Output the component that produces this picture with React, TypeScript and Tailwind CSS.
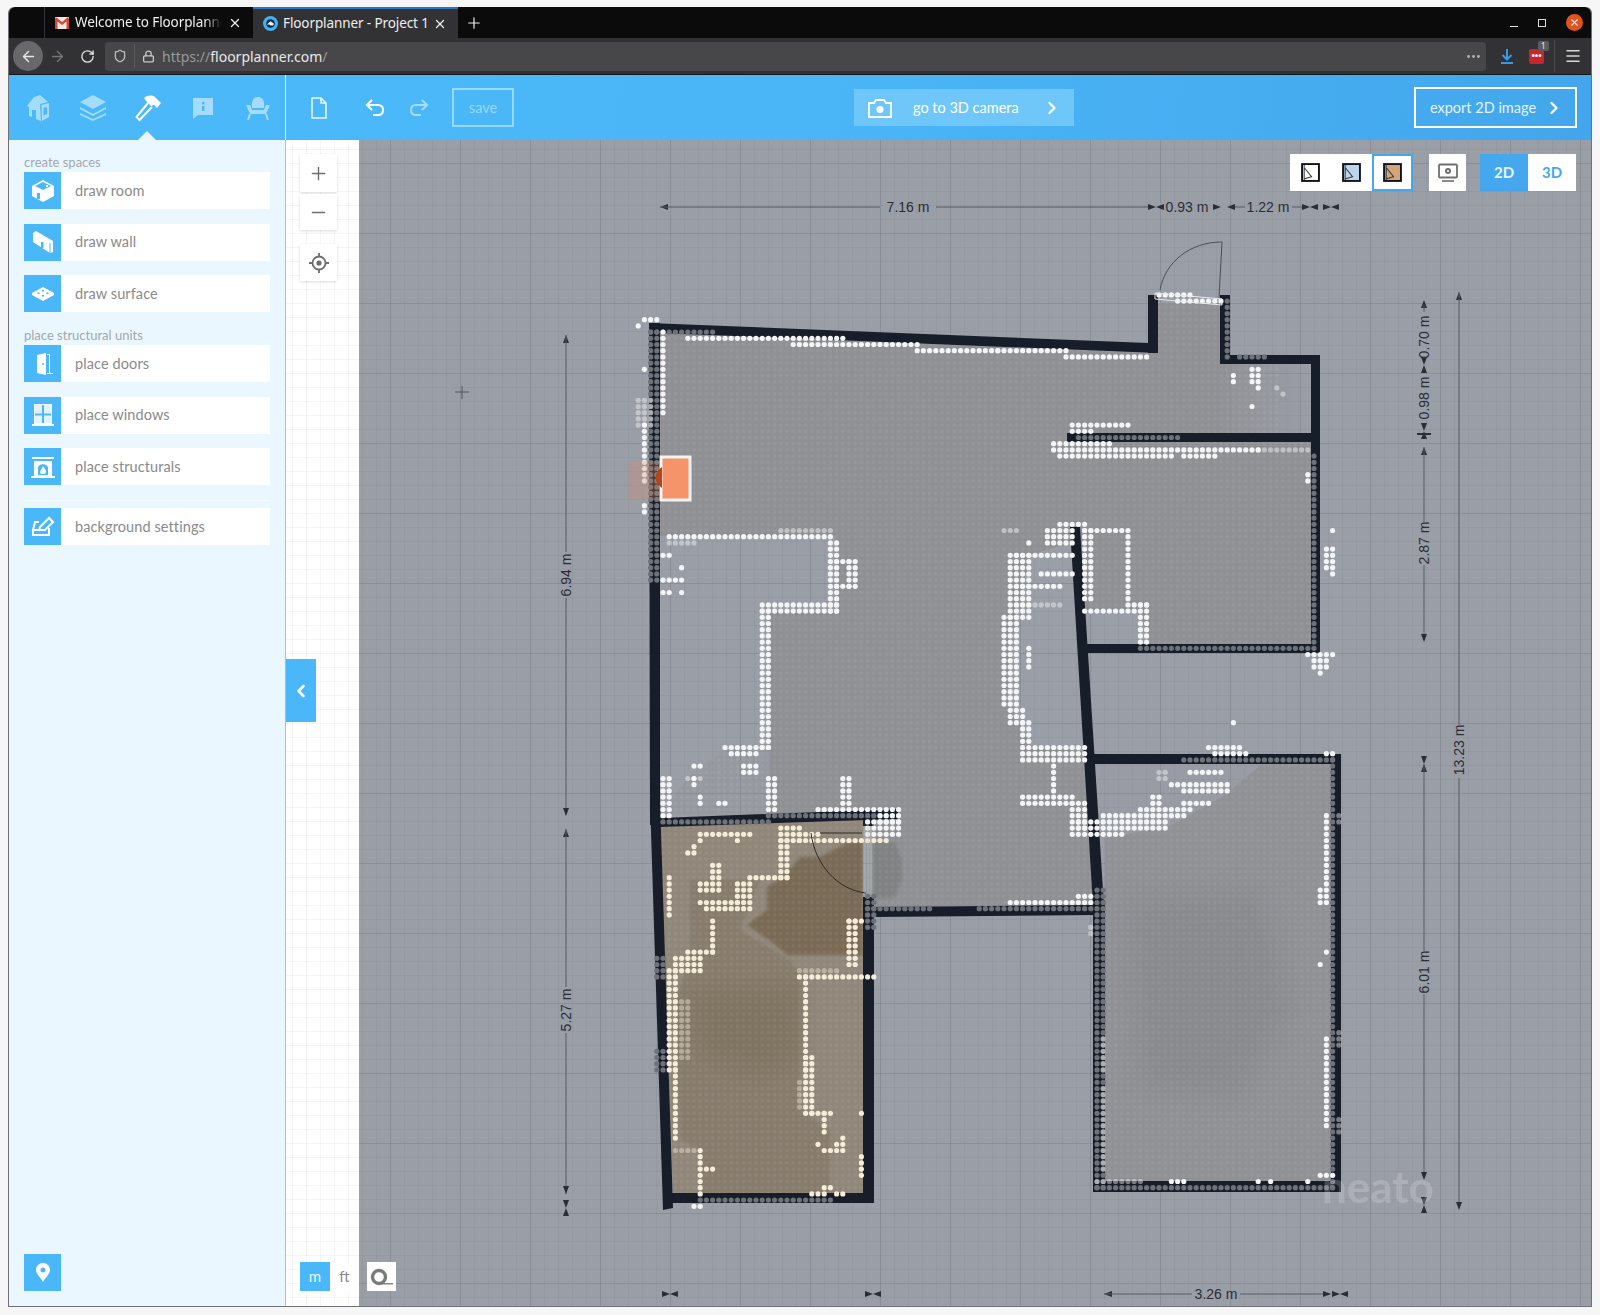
import React from "react";
import { ArrowLeft, ArrowRight, ChevronLeft, ChevronRight, Ellipsis, Lock, Menu, Minus, Plus, RotateCw, Shield, X } from "lucide-react";

const FONT_UI = "font-['Noto_Sans',sans-serif]";
const FONT_APP = "font-['Lato',sans-serif]";

// dot lattice of the scan, in page pixels
const LX = 663;
const LY = 536.7;
const PITCH = 6.2;

type Run = [number, number, number, number];

const FILLS: Record<string, string> = {
  w: "#f4f5f6",
  l: "rgba(255,255,255,.42)",
  d: "#6e7279",
  c: "#f5ecd9",
  m: "rgba(245,236,217,.4)",
};

const RUNS: Record<string, Run[]> = {
  d: [
    [652, 335, 658, 580], [652, 330, 712, 332], [1227, 300, 1227, 355], [1240, 357, 1265, 357],
    [1080, 437, 1180, 437], [1314, 455, 1314, 650], [1140, 648, 1310, 648], [1182, 759, 1335, 759],
    [1335, 762, 1335, 1188], [1097, 892, 1103, 1186], [1097, 1187, 1335, 1187], [662, 822, 770, 822],
    [770, 813, 897, 816], [700, 1199, 830, 1199], [980, 908, 1090, 908], [875, 908, 930, 908],
    [870, 895, 876, 925], [655, 1050, 662, 1070], [655, 957, 662, 977],
  ],
  w: [
    [688, 338, 843, 338], [793, 344, 920, 344], [920, 348, 1000, 348], [1000, 351, 1063, 351], [1063, 357, 1147, 357],
    [1157, 295, 1187, 295], [1177, 301, 1220, 301],
    [663, 335, 663, 410], [645, 370, 645, 370], [645, 427, 645, 482], [645, 320, 658, 320], [638, 326, 638, 326],
    [645, 508, 645, 515], [667, 536, 833, 536], [832, 540, 838, 610], [850, 560, 857, 587], [838, 560, 850, 560], [838, 587, 850, 587],
    [762, 604, 837, 604], [762, 610, 837, 610], [763, 610, 769, 745], [725, 747, 770, 747], [730, 753, 757, 753], [745, 765, 757, 772],
    [663, 555, 670, 555], [683, 565, 683, 565], [663, 578, 680, 578], [683, 590, 683, 590], [663, 590, 670, 590],
    [695, 765, 700, 765], [695, 777, 695, 785], [701, 795, 701, 803], [663, 777, 670, 813], [768, 777, 775, 810], [842, 777, 850, 803],
    [720, 803, 727, 803], [817, 808, 900, 808], [867, 825, 900, 835], [882, 816, 900, 822],
    [1017, 553, 1070, 553], [1010, 557, 1030, 620], [1003, 620, 1017, 707], [1012, 710, 1020, 725], [1020, 725, 1027, 742],
    [1020, 747, 1083, 760], [1053, 767, 1053, 790], [1020, 797, 1073, 803], [1073, 803, 1087, 837], [1028, 647, 1028, 667],
    [1028, 543, 1028, 543], [1047, 530, 1073, 543], [1060, 524, 1087, 524], [1087, 530, 1120, 530], [1128, 530, 1128, 600],
    [1128, 603, 1148, 603], [1140, 603, 1148, 642], [1085, 610, 1133, 610], [1085, 533, 1090, 600], [1040, 573, 1070, 573], [1017, 587, 1057, 587],
    [1072, 424, 1130, 424], [1072, 431, 1093, 431], [1053, 443, 1107, 443], [1052, 450, 1260, 450], [1058, 456, 1173, 456], [1182, 456, 1212, 456],
    [1233, 375, 1233, 382], [1252, 368, 1258, 382], [1258, 388, 1258, 388], [1252, 407, 1252, 407],
    [1307, 473, 1307, 480], [1327, 548, 1333, 567], [1333, 573, 1333, 573], [1333, 530, 1333, 530], [1307, 653, 1335, 653], [1313, 660, 1325, 667], [1320, 673, 1320, 673],
    [1234, 721, 1234, 721], [1210, 747, 1240, 747], [1214, 754, 1247, 754], [1172, 783, 1225, 783], [1183, 790, 1227, 790], [1193, 773, 1220, 773],
    [1183, 802, 1207, 802], [1140, 809, 1187, 809], [1103, 816, 1183, 816], [1080, 821, 1167, 827], [1090, 834, 1123, 834], [1152, 796, 1162, 804],
    [1013, 902, 1093, 902], [1080, 895, 1093, 895], [1327, 814, 1327, 883], [1320, 891, 1327, 902], [1327, 951, 1327, 951], [1320, 964, 1320, 964],
    [1327, 1038, 1327, 1126], [1327, 754, 1333, 754], [1258, 1179, 1258, 1179], [1270, 1179, 1270, 1179], [1308, 1179, 1308, 1179], [1320, 1173, 1330, 1173], [1170, 1179, 1185, 1179],
    [695, 1206, 701, 1206],
  ],
  l: [
    [638, 400, 650, 427], [780, 530, 830, 530], [667, 542, 697, 542], [1003, 530, 1017, 530], [1017, 605, 1057, 605], [1260, 450, 1310, 450],
    [1276, 388, 1276, 388], [1282, 394, 1282, 394], [1105, 1091, 1105, 1172], [1105, 1041, 1105, 1072], [1100, 1179, 1143, 1179], [1090, 925, 1090, 933], [1340, 814, 1340, 824], [1340, 1030, 1340, 1048],
    [1340, 1122, 1340, 1135], [1160, 773, 1165, 778], [688, 777, 700, 777],
  ],
  c: [
    [700, 833, 747, 833], [700, 840, 700, 840], [737, 840, 737, 840], [688, 852, 695, 852], [695, 845, 695, 845],
    [778, 827, 797, 840], [797, 833, 820, 833], [797, 840, 887, 840], [780, 840, 788, 877], [750, 877, 788, 877],
    [713, 863, 720, 877], [700, 883, 720, 890], [737, 883, 747, 907], [700, 902, 740, 902], [707, 908, 730, 908], [670, 877, 670, 913],
    [713, 920, 713, 950], [687, 952, 713, 952], [673, 957, 703, 970], [668, 973, 675, 1067], [675, 1067, 678, 1137],
    [850, 920, 857, 963], [847, 922, 862, 922], [798, 977, 873, 977], [803, 980, 807, 1067], [807, 1060, 812, 1113], [812, 1113, 832, 1113],
    [825, 1113, 825, 1132], [818, 1143, 818, 1143], [825, 1150, 840, 1150], [843, 1137, 843, 1143], [836, 1143, 836, 1143],
    [862, 1113, 862, 1113], [862, 1155, 862, 1175], [825, 1187, 832, 1187], [812, 1193, 825, 1193], [838, 1193, 843, 1193],
    [701, 1150, 701, 1192], [708, 1168, 713, 1168],
  ],
  m: [[798, 970, 835, 970], [673, 1150, 695, 1150], [800, 1080, 800, 1110], [680, 1000, 685, 1060]],
};

const snapped = (v: number, origin: number) => Math.round((v - origin) / PITCH);

const scanDots = Object.entries(RUNS).flatMap(([kind, runs]) =>
  runs.flatMap(([x1, y1, x2, y2]) => {
    const out: { x: number; y: number; kind: string }[] = [];
    for (let i = snapped(x1, LX); i <= snapped(x2, LX); i++) {
      for (let j = snapped(y1, LY); j <= snapped(y2, LY); j++) {
        out.push({ x: LX + i * PITCH, y: LY + j * PITCH, kind });
      }
    }
    return out;
  })
);

const WALLS = [
  "649,323 1148,343 1158,353 660,333",
  "649,323 660,323 660,825 650,825",
  "650,800 660,800 673,1208 663,1210",
  "1148,295 1158,295 1158,353 1148,353",
  "1220,295 1230,295 1230,364 1220,364",
  "1220,355 1320,355 1320,364 1220,364",
  "1311,355 1320,355 1320,653 1311,653",
  "1067,433 1320,433 1320,442 1067,442",
  "1085,644 1320,644 1320,653 1085,653",
  "1070,527 1080,527 1104,906 1093,906",
  "1090,754 1341,754 1341,764 1090,764",
  "1331,754 1341,754 1341,1192 1331,1192",
  "1093,1181 1341,1181 1341,1192 1093,1192",
  "1093,900 1105,900 1105,1192 1093,1192",
  "873,907 1095,905 1095,915 873,917",
  "660,818 898,809 898,819 660,827",
  "863,897 874,897 874,1203 863,1203",
  "863,812 874,812 874,826 863,826",
  "670,1193 874,1193 874,1203 670,1203",
];

const MAIN_FLOOR =
  "660,333 1148,353 1158,303 1220,303 1222,364 1222,433 1228,442 1311,442 1311,644 1148,644 1140,610 1086,610 1080,540 1030,555 1015,620 1007,700 1030,745 1085,752 1095,905 875,907 872,825 860,812 770,815 768,610 835,610 835,536 660,536";
const RIGHT_FLOOR = "1105,838 1170,826 1225,795 1262,764 1331,764 1331,1181 1105,1181";
const KITCHEN_FLOOR = "660,827 863,818 863,1193 673,1193";
const LOWER_LEFT = "660,815 768,815 768,750 725,750 690,775";

function Tri({ x, y, dir }: { x: number; y: number; dir: "l" | "r" | "u" | "d" }) {
  const pts = {
    l: `${x},${y} ${x + 8},${y - 3} ${x + 8},${y + 3}`,
    r: `${x},${y} ${x - 8},${y - 3} ${x - 8},${y + 3}`,
    u: `${x},${y} ${x - 3},${y + 8} ${x + 3},${y + 8}`,
    d: `${x},${y} ${x - 3},${y - 8} ${x + 3},${y - 8}`,
  }[dir];
  return <polygon points={pts} fill="#2a2e36" />;
}

function PairH({ x, y }: { x: number; y: number }) {
  return (
    <>
      <Tri x={x} y={y} dir="r" />
      <Tri x={x} y={y} dir="l" />
    </>
  );
}

function PairV({ x, y }: { x: number; y: number }) {
  return (
    <>
      <Tri x={x} y={y} dir="d" />
      <Tri x={x} y={y} dir="u" />
    </>
  );
}

function Line({ x1, y1, x2, y2 }: { x1: number; y1: number; x2: number; y2: number }) {
  return <line x1={x1} y1={y1} x2={x2} y2={y2} stroke="#565a62" strokeWidth="1" />;
}

function DimH({ label, x, y }: { label: string; x: number; y: number }) {
  return (
    <text x={x} y={y + 5} textAnchor="middle" fontSize="14" fill="#2a2e36" fontFamily="'Liberation Sans',sans-serif">
      {label}
    </text>
  );
}

function DimV({ label, x, y }: { label: string; x: number; y: number }) {
  return (
    <text x={x + 5} y={y} transform={`rotate(-90 ${x + 5} ${y})`} textAnchor="middle" fontSize="14" fill="#2a2e36" fontFamily="'Liberation Sans',sans-serif">
      {label}
    </text>
  );
}

function FloorPlan() {
  return (
    <svg className="absolute inset-0" width="1232" height="1166" viewBox="359 140 1232 1166">
      <defs>
        <pattern id="hatch" x={LX - PITCH / 2} y={LY - PITCH / 2} width={PITCH} height={PITCH} patternUnits="userSpaceOnUse">
          <circle cx={PITCH / 2} cy={PITCH / 2} r="1.9" fill="rgba(255,255,255,.055)" />
        </pattern>
        <linearGradient id="fade" x1="0" x2="1" y1="0" y2="0">
          <stop offset="0" stopColor="#8f9094" stopOpacity=".9" />
          <stop offset="1" stopColor="#8f9094" stopOpacity=".05" />
        </linearGradient>
        <filter id="soft" x="-5%" y="-5%" width="110%" height="110%">
          <feGaussianBlur stdDeviation="1.4" />
        </filter>
        <filter id="wide" x="-20%" y="-20%" width="140%" height="140%">
          <feGaussianBlur stdDeviation="12" />
        </filter>
        <clipPath id="floor-clip">
          <polygon points={MAIN_FLOOR} />
          <polygon points={RIGHT_FLOOR} />
          <polygon points={KITCHEN_FLOOR} />
          <polygon points={LOWER_LEFT} />
          <polygon points="1222,364 1280,364 1280,433 1222,433" />
        </clipPath>
        <clipPath id="right-clip">
          <polygon points={RIGHT_FLOOR} />
        </clipPath>
        <clipPath id="kitchen-clip">
          <polygon points={KITCHEN_FLOOR} />
        </clipPath>
      </defs>

      {/* scanned floor */}
      <polygon points={MAIN_FLOOR} fill="#8f9094" />
      <polygon points="1222,364 1311,364 1311,433 1222,433" fill="url(#fade)" />
      <polygon points={LOWER_LEFT} fill="#8f9094" opacity=".35" />
      <polygon points={RIGHT_FLOOR} fill="#909195" />
      <g clipPath="url(#right-clip)">
        <polygon points="1130,900 1260,890 1290,1010 1240,1100 1140,1090" fill="#85868a" opacity=".6" filter="url(#wide)" />
      </g>
      <polygon points="1100,764 1262,764 1225,795 1170,826 1100,838" fill="#909195" opacity=".12" />
      <polygon points="873,842 895,842 902,860 902,880 895,898 873,898" fill="#808182" filter="url(#soft)" />

      {/* kitchen */}
      <polygon points={KITCHEN_FLOOR} fill="#90877a" />
      <g clipPath="url(#kitchen-clip)">
        <polygon points="690,880 760,880 740,930 790,960 800,975 800,1110 830,1130 830,1193 700,1193 700,1150 680,1140 675,1000 690,960" fill="#877b6c" filter="url(#soft)" />
        <polygon points="690,990 800,985 800,1060 760,1075 700,1055" fill="#7f7362" filter="url(#wide)" />
        <polygon points="800,857 820,857 847,843 863,842 863,955 787,955 773,943 747,925 767,910 767,887 783,877" fill="#796a55" filter="url(#soft)" />
      </g>

      <rect x="359" y="140" width="1232" height="1166" fill="url(#hatch)" clipPath="url(#floor-clip)" />

      {WALLS.map((pts) => (
        <polygon key={pts} points={pts} fill="#181e29" />
      ))}

      {scanDots.map((d) => (
        <circle key={`${d.kind}${d.x}-${d.y}`} cx={d.x} cy={d.y} r="2.6" fill={FILLS[d.kind]} />
      ))}

      {/* doors */}
      <polygon points="1155,293 1222,299 1222,305 1155,299" fill="none" stroke="#e8e9ea" strokeWidth="1" />
      <path d="M1222 242 C1190 242 1165 262 1160 290 M1222 242 L1219 298" fill="none" stroke="#4a4e55" strokeWidth="1" />
      <path d="M811 833 C815 865 838 890 866 893 M820 833 L862 833" fill="none" stroke="#2d2a26" strokeWidth="1" />
      <path d="M865 826 V893 M868 826 V893 M871 826 V893" fill="none" stroke="#b8b9ba" strokeWidth="1" opacity=".7" />

      {/* selected marker */}
      <rect x="627" y="461" width="34" height="39" fill="#d58c6c" opacity=".3" />
      <rect x="661" y="457" width="29" height="43" fill="#f5946b" stroke="#f3f3f3" strokeWidth="3" />
      <path d="M662 467 C654 472 653 482 662 488 Z" fill="#b4471a" />

      {/* cursor cross */}
      <path d="M462 386 V399 M455 392 H469" stroke="#50545c" strokeWidth="1" />

      {/* dimensions */}
      <Tri x={660} y={207} dir="l" />
      <Line x1={660} y1={207} x2={880} y2={207} />
      <DimH label="7.16 m" x={908} y={207} />
      <Line x1={936} y1={207} x2={1150} y2={207} />
      <PairH x={1156} y={207} />
      <DimH label="0.93 m" x={1187} y={207} />
      <Tri x={1221} y={207} dir="r" />
      <Tri x={1227} y={207} dir="l" />
      <Line x1={1235} y1={207} x2={1245} y2={207} />
      <DimH label="1.22 m" x={1268} y={207} />
      <Line x1={1292} y1={207} x2={1304} y2={207} />
      <PairH x={1310} y={207} />
      <PairH x={1331} y={207} />

      <Tri x={566} y={335} dir="u" />
      <Line x1={566} y1={335} x2={566} y2={552} />
      <DimV label="6.94 m" x={566} y={575} />
      <Line x1={566} y1={598} x2={566} y2={815} />
      <Tri x={566} y={816} dir="d" />
      <Tri x={566} y={829} dir="u" />
      <Line x1={566} y1={829} x2={566} y2={987} />
      <DimV label="5.27 m" x={566} y={1010} />
      <Line x1={566} y1={1033} x2={566} y2={1194} />
      <Tri x={566} y={1194} dir="d" />
      <PairV x={566} y={1208} />

      <Tri x={1424} y={300} dir="u" />
      <Line x1={1424} y1={305} x2={1424} y2={312} />
      <DimV label="0.70 m" x={1424} y={337} />
      <PairV x={1424} y={365} />
      <DimV label="0.98 m" x={1424} y={398} />
      <PairV x={1424} y={431} />
      <path d="M1417 434 H1431" stroke="#2a2e36" strokeWidth="2" />
      <Tri x={1424} y={447} dir="u" />
      <Line x1={1424} y1={447} x2={1424} y2={522} />
      <DimV label="2.87 m" x={1424} y={543} />
      <Line x1={1424} y1={565} x2={1424} y2={640} />
      <Tri x={1424} y={642} dir="d" />

      <Tri x={1459} y={292} dir="u" />
      <Line x1={1459} y1={292} x2={1459} y2={725} />
      <DimV label="13.23 m" x={1459} y={750} />
      <Line x1={1459} y1={778} x2={1459} y2={1208} />
      <Tri x={1459} y={1210} dir="d" />

      <PairV x={1424} y={764} />
      <Line x1={1424} y1={764} x2={1424} y2={951} />
      <DimV label="6.01 m" x={1424} y={972} />
      <Line x1={1424} y1={994} x2={1424} y2={1178} />
      <Tri x={1424} y={1180} dir="d" />
      <PairV x={1424} y={1205} />

      <PairH x={670} y={1294} />
      <PairH x={873} y={1294} />
      <Tri x={1104} y={1294} dir="l" />
      <Line x1={1104} y1={1294} x2={1192} y2={1294} />
      <DimH label="3.26 m" x={1216} y={1294} />
      <Line x1={1240} y1={1294} x2={1330} y2={1294} />
      <Tri x={1331} y={1294} dir="r" />
      <PairH x={1340} y={1294} />

      <text x="1322" y="1203" fontSize="44" fontWeight="700" fill="#ffffff" opacity=".18" fontFamily="'Lato',sans-serif">
        neato
      </text>
    </svg>
  );
}

function GmailIcon() {
  return (
    <svg width="14" height="12" viewBox="0 0 14 12" className="shrink-0">
      <rect width="14" height="12" rx="1" fill="#efe9e6" />
      <path d="M0 1.5 V12 H2.5 V4.5 L7 8 L11.5 4.5 V12 H14 V1.5 L12.5 0.5 L7 5 L1.5 0.5 Z" fill="#d0493a" />
    </svg>
  );
}

function FloorplannerFavicon() {
  return (
    <svg width="15" height="15" viewBox="0 0 16 16" className="shrink-0">
      <circle cx="8" cy="8" r="8" fill="#3fb2f4" />
      <circle cx="8" cy="8" r="4.6" fill="#0f2533" />
      <path d="M4 9 L8 5.5 L11.5 8 L11 10 H8 L6.5 9 Z" fill="#e6f5fe" />
    </svg>
  );
}

function Tab({ title, active, icon, fade }: { title: string; active?: boolean; icon: React.ReactNode; fade?: boolean }) {
  return (
    <div className={`relative flex h-full shrink-0 items-center pl-[10px] pr-[11px] ${active ? "w-[205px] gap-[5px] border-t-2 border-[#2f74c0] bg-[#323234]" : "w-[208px] gap-[6px]"}`}>
      {icon}
      <span className={`min-w-0 flex-1 overflow-hidden whitespace-nowrap text-[13.5px] tracking-[-.1px] text-[#eeeeee] ${fade ? "[mask-image:linear-gradient(to_right,black_88%,transparent)]" : ""}`}>
        {title}
      </span>
      <X size={14} strokeWidth={2.2} className="shrink-0 text-[#eeeeee]" />
    </div>
  );
}

function TitleBar() {
  return (
    <div className={`flex h-[31px] shrink-0 items-stretch rounded-t-[6px] bg-[#0b0b0c] ${FONT_UI}`}>
      <div className="w-[36px] border-r border-[#34343a]" />
      <Tab title="Welcome to Floorplanner" icon={<GmailIcon />} fade />
      <Tab title="Floorplanner - Project 1" icon={<FloorplannerFavicon />} active />
      <div className="flex w-[32px] items-center justify-center">
        <Plus size={18} strokeWidth={1.6} className="text-[#eeeeee]" />
      </div>
      <div className="flex-1" />
      <div className="flex items-center gap-[20px] pr-[8px]">
        <div className="mt-[8px] h-[1.5px] w-[8px] bg-[#dddddd]" />
        <div className="h-[8px] w-[8px] border-[1.5px] border-[#dddddd]" />
        <div className="flex h-[17px] w-[17px] items-center justify-center rounded-full bg-[#e2521d]">
          <X size={11} strokeWidth={2.4} className="text-[#ffe9df]" />
        </div>
      </div>
    </div>
  );
}

function NavBar() {
  return (
    <div className={`flex h-[37px] shrink-0 items-center border-b border-[#15171a] bg-[#323234] pl-[4px] pr-[9px] ${FONT_UI}`}>
      <div className="flex h-[30px] w-[30px] items-center justify-center rounded-full bg-[#68686a]">
        <ArrowLeft size={17} strokeWidth={2} className="text-[#e8e8e8]" />
      </div>
      <ArrowRight size={17} strokeWidth={1.8} className="ml-[6px] text-[#77777a]" />
      <RotateCw size={15} strokeWidth={2.2} className="ml-[14px] text-[#dddddd]" />
      <div className="ml-[10px] flex h-[29px] flex-1 items-center rounded-[4px] bg-[#474749] pl-[8px] pr-[4px]">
        <Shield size={14} strokeWidth={2} className="text-[#c8c8c8]" />
        <div className="ml-[7px] h-[24px] w-px bg-[#5a5a5c]" />
        <Lock size={13} strokeWidth={2.4} className="ml-[7px] text-[#c8c8c8]" />
        <span className="ml-[7px] text-[14px] text-[#98989a]">
          https://<span className="text-[#e8e8e8]">floorplanner.com</span>/
        </span>
        <div className="flex-1" />
        <Ellipsis size={17} className="text-[#b4b4b6]" />
      </div>
      <svg width="16" height="17" viewBox="0 0 16 17" className="ml-[13px]">
        <path d="M8 1 V11 M3.5 7 L8 11.5 L12.5 7 M2 15 H14" fill="none" stroke="#3a9ae6" strokeWidth="2" />
      </svg>
      <div className="relative ml-[14px] flex h-[15px] w-[15px] items-center justify-center rounded-[2px] bg-[#c8242b]">
        <span className="mt-[-2px] text-[9px] font-bold leading-none text-white">•••</span>
        <span className="absolute left-[9px] top-[-8px] rounded-[2px] bg-[#5c5c5e] px-[3px] text-[8px] leading-[10px] text-[#eeeeee]">1</span>
      </div>
      <div className="ml-[10px] h-[32px] w-px bg-[#4c4c4e]" />
      <Menu size={18} strokeWidth={2} className="ml-[9px] text-[#d8d8d8]" />
    </div>
  );
}

function HeaderIcons() {
  const dim = "#a6dcfb";
  const slot = "flex w-[55px] items-center justify-center";
  return (
    <div className="relative flex w-[277px] shrink-0 items-center border-r border-[#dff2fe] pl-[2px]">
      <div className={slot}>
        <svg width="24" height="28" viewBox="0 0 24 28">
          <path d="M1 12 L8 3 L14 1 L22 8 L14 10 L15 27 L10 25 V16 H6 V23 L3 22 V13 Z" fill={dim} />
          <path d="M15.5 11 L23 9 V23 L16 27 Z" fill={dim} />
          <path d="M17.5 14 L21 13 V20 L17.5 21.5 Z" fill="#4ab8f8" />
        </svg>
      </div>
      <div className={slot}>
        <svg width="28" height="27" viewBox="0 0 28 27">
          <path d="M14 1 L27 8 L14 15 L1 8 Z M1 13 L14 20 L27 13 L27 15 L14 22 L1 15 Z M1 19 L14 25 L27 19 L27 21 L14 27 L1 21 Z" fill={dim} />
        </svg>
      </div>
      <div className={slot}>
        <svg width="28" height="28" viewBox="0 0 28 28">
          <path d="M14 9 L2.5 23 L5.5 26 L18 13" fill="none" stroke="#ffffff" strokeWidth="2" />
          <path d="M10 4 C14 1 18 1 21 3 L27 9 L23 14 L20 11 L17 12 L13 8 Z" fill="#ffffff" />
        </svg>
      </div>
      <div className={slot}>
        <svg width="22" height="22" viewBox="0 0 22 22">
          <path d="M1 1 H21 V18 H6 L1 22 Z" fill={dim} />
          <rect x="10" y="5" width="2.4" height="2.4" fill="#4ab8f8" />
          <rect x="10" y="9" width="2.4" height="5" fill="#4ab8f8" />
        </svg>
      </div>
      <div className={slot}>
        <svg width="26" height="24" viewBox="0 0 26 24">
          <path d="M7 12 C6 4 9 1 13 1 C17 1 20 4 19 12 Z" fill={dim} />
          <path d="M1 9 L5 9 L7 14 L19 14 L21 9 L25 9 L21 18 L5 18 Z" fill={dim} />
          <path d="M5 18 L3 24 M21 18 L23 24" stroke={dim} strokeWidth="2" />
        </svg>
      </div>
      <div className="absolute bottom-0 left-[129px] h-0 w-0 border-x-[9px] border-b-[9px] border-x-transparent border-b-[#e9f6fe]" />
    </div>
  );
}

function AppHeader() {
  return (
    <div className={`flex h-[65px] shrink-0 bg-[linear-gradient(100deg,#4bb9f9,#4ab6f7_50%,#43a6ec)] ${FONT_APP}`}>
      <HeaderIcons />
      <div className="flex flex-1 items-center pr-[14px]">
        <svg width="18" height="22" viewBox="0 0 18 22" className="ml-[24px]">
          <path d="M2 1 H11 L16 6 V21 H2 Z M11 1 V6 H16" fill="none" stroke="#e8f6fe" strokeWidth="1.6" />
        </svg>
        <svg width="20" height="18" viewBox="0 0 20 18" className="ml-[37px]">
          <path d="M7 1 L2 6 L7 11 M2 6 H13 C16 6 18 8 18 11 C18 14 16 16 13 16 H8" fill="none" stroke="#ffffff" strokeWidth="2" />
        </svg>
        <svg width="20" height="18" viewBox="0 0 20 18" className="ml-[24px]">
          <path d="M13 1 L18 6 L13 11 M18 6 H7 C4 6 2 8 2 11 C2 14 4 16 7 16 H12" fill="none" stroke="#a6dcfb" strokeWidth="2" />
        </svg>
        <div className="ml-[23px] flex h-[39px] w-[62px] items-center justify-center border-2 border-[#9ad8fb] text-[14.5px] text-[#9ad8fb]">save</div>
        <div className="ml-[340px] flex h-[37px] w-[220px] items-center bg-[#6fc7f9] text-[14.5px] text-white">
          <svg width="24" height="20" viewBox="0 0 24 20" className="ml-[14px]">
            <path d="M8 2 H16 L18 5 H23 V19 H1 V5 H6 Z" fill="none" stroke="#ffffff" strokeWidth="1.8" />
            <circle cx="12" cy="11.5" r="3.6" fill="#ffffff" />
          </svg>
          <span className="ml-[21px]">go to 3D camera</span>
          <ChevronRight size={20} strokeWidth={2.6} className="ml-[23px]" />
        </div>
        <div className="flex-1" />
        <div className="flex h-[41px] w-[163px] items-center justify-center gap-[8px] border-2 border-white pl-[3px] text-[14.5px] text-[#e2f4fe]">
          <span>export 2D image</span>
          <ChevronRight size={20} strokeWidth={2.8} className="text-white" />
        </div>
      </div>
    </div>
  );
}

const ICON = "#ffffff";

const toolIcons: Record<string, React.ReactNode> = {
  room: (
    <svg width="24" height="24" viewBox="0 0 24 24">
      <path d="M12 1 L23 7 V17 L12 23 L1 17 V7 Z" fill={ICON} />
      <path d="M12 3 L20 7 L12 11 L4 7 Z" fill="#4ab8f8" />
      <rect x="6" y="14" width="3" height="6" fill="#4ab8f8" />
      <rect x="15" y="6" width="2" height="2" fill={ICON} />
    </svg>
  ),
  wall: (
    <svg width="22" height="24" viewBox="0 0 22 24">
      <path d="M1 3 L4 1 L21 11 V22 L18 23 L1 12 Z" fill={ICON} />
      <rect x="9" y="12" width="2.4" height="6" fill="#4ab8f8" />
      <path d="M18 13 V23" stroke="#4ab8f8" strokeWidth="1" />
    </svg>
  ),
  surface: (
    <svg width="24" height="16" viewBox="0 0 24 16">
      <path d="M12 1 L23 7 V9 L12 15 L1 9 V7 Z" fill={ICON} />
      <path d="M11 4 h2 v1.5 h-2 Z M6.5 6.5 h2 v1.5 h-2 Z M15.5 6.5 h2 v1.5 h-2 Z M11 9 h2 v1.5 h-2 Z" fill="#4ab8f8" />
    </svg>
  ),
  doors: (
    <svg width="20" height="24" viewBox="0 0 20 24">
      <path d="M4 3 L13 1 V23 L4 21 Z" fill={ICON} />
      <path d="M14 2 H17 V21 H20 V22 H14 V21 H16 V3 H14 Z" fill={ICON} />
      <circle cx="10" cy="12" r="1" fill="#4ab8f8" />
    </svg>
  ),
  windows: (
    <svg width="22" height="24" viewBox="0 0 22 24">
      <path d="M2 1 H20 V21 H22 V23 H0 V21 H2 Z" fill={ICON} />
      <path d="M3 2 H10 V10.5 H3 Z M12 2 H19 V10.5 H12 Z M3 12.5 H10 V20 H3 Z M12 12.5 H19 V20 H12 Z" fill="#dff2fe" />
      <path d="M10 2 H12 V20 H10 Z M3 10.5 H19 V12.5 H3 Z" fill="#4ab8f8" />
    </svg>
  ),
  structurals: (
    <svg width="24" height="22" viewBox="0 0 24 22">
      <rect x="1" y="1" width="22" height="2" fill={ICON} />
      <rect x="3" y="5" width="18" height="15" fill={ICON} />
      <rect x="0" y="20" width="24" height="2" fill={ICON} />
      <path d="M7 19 V12 C7 7 17 7 17 12 V19 Z" fill="#4ab8f8" />
      <path d="M12 10 C13 12 15 13 15 16 C15 18 13 18 12 18 C11 18 9 18 9 16 C9 14 11 13 12 10 Z" fill={ICON} />
    </svg>
  ),
  background: (
    <svg width="24" height="24" viewBox="0 0 24 24" fill="none" stroke={ICON} strokeWidth="2">
      <path d="M8 7 H4 L2 15 H14 L22 7 L18 3 L9 12 L8 16" />
      <path d="M2 15 V20 H18 V13" />
    </svg>
  ),
};

function ToolButton({ label, icon }: { label: string; icon: string }) {
  return (
    <div className="flex h-[37px] w-[246px] bg-white">
      <div className="flex w-[37px] items-center justify-center bg-[#4ab8f8]">{toolIcons[icon]}</div>
      <span className="ml-[14px] self-center text-[14.5px] tracking-[.1px] text-[#8a8a8a]">{label}</span>
    </div>
  );
}

function Sidebar() {
  return (
    <aside className={`flex w-[277px] shrink-0 flex-col border-r border-[#b4bbc1] bg-[#ebf7fe] pl-[15px] pr-[15px] ${FONT_APP}`}>
      <div className="mt-[13px] text-[13px] leading-[19px] text-[#a2a9ae]">create spaces</div>
      <div className="flex flex-col gap-[14.5px]">
        <ToolButton label="draw room" icon="room" />
        <ToolButton label="draw wall" icon="wall" />
        <ToolButton label="draw surface" icon="surface" />
      </div>
      <div className="mt-[14px] text-[13px] leading-[19px] text-[#a2a9ae]">place structural units</div>
      <div className="flex flex-col gap-[14.5px]">
        <ToolButton label="place doors" icon="doors" />
        <ToolButton label="place windows" icon="windows" />
        <ToolButton label="place structurals" icon="structurals" />
      </div>
      <div className="mt-[15px] h-px w-[246px] bg-[#f6fbff]" />
      <div className="mt-[7px]">
        <ToolButton label="background settings" icon="background" />
      </div>
      <div className="mt-auto mb-[15px] flex h-[37px] w-[37px] items-center justify-center bg-[#4ab8f8]">
        <svg width="14" height="19" viewBox="0 0 14 19">
          <path d="M7 0 C11 0 14 3 14 7 C14 11 9 15 7 19 C5 15 0 11 0 7 C0 3 3 0 7 0 Z M7 4.5 A2.5 2.5 0 1 0 7 9.5 A2.5 2.5 0 1 0 7 4.5 Z" fill="#ffffff" fillRule="evenodd" />
        </svg>
      </div>
    </aside>
  );
}

function ZoomControls() {
  return (
    <div className="absolute left-[14px] top-[14px] flex w-[37px] flex-col">
      <div className="flex h-[38px] items-center justify-center bg-white shadow-[0_1px_3px_rgba(0,0,0,.14)]">
        <Plus size={21} strokeWidth={1.6} className="text-[#6e6e6e]" />
      </div>
      <div className="mt-[2px] flex h-[36px] items-center justify-center bg-white shadow-[0_1px_3px_rgba(0,0,0,.14)]">
        <Minus size={21} strokeWidth={1.6} className="text-[#6e6e6e]" />
      </div>
      <div className="mt-[14px] flex h-[37px] items-center justify-center bg-white shadow-[0_1px_3px_rgba(0,0,0,.14)]">
        <svg width="20" height="20" viewBox="0 0 20 20" fill="none" stroke="#6e6e6e" strokeWidth="1.8">
          <circle cx="10" cy="10" r="6.5" />
          <circle cx="10" cy="10" r="2.6" fill="#6e6e6e" stroke="none" />
          <path d="M10 0 V3.5 M10 16.5 V20 M0 10 H3.5 M16.5 10 H20" />
        </svg>
      </div>
    </div>
  );
}

function UnitSwitch() {
  return (
    <div className={`absolute bottom-[15px] left-[14px] z-10 flex text-[15px] ${FONT_APP}`}>
      <div className="flex h-[29px] w-[30px] items-center justify-center bg-[#4ab8f8] text-[#e9f6fe]">m</div>
      <div className="flex h-[29px] w-[29px] items-center justify-center bg-white text-[#8a8a8a]">ft</div>
      <div className="ml-[8px] flex h-[29px] w-[29px] items-center justify-center bg-white">
        <svg width="24" height="18" viewBox="0 0 24 18" fill="none" stroke="#7a7a7a">
          <circle cx="9" cy="9" r="6.5" strokeWidth="3.4" />
          <path d="M10 15.8 H23" strokeWidth="1.4" />
        </svg>
      </div>
    </div>
  );
}

function ViewToggles() {
  const glyph = (fill: string) => (
    <svg width="19" height="19" viewBox="0 0 18 18">
      <rect x="1" y="1" width="16" height="16" fill={fill} stroke="#111318" strokeWidth="1.8" />
      <path d="M3 2 V16 M3.5 5 L10 13 L3.5 15" fill="none" stroke="#33363c" strokeWidth="1" />
    </svg>
  );
  return (
    <div className={`absolute right-[15px] top-[14px] flex items-start ${FONT_APP}`}>
      <div className="flex h-[37px] bg-white">
        <div className="flex w-[41px] items-center justify-center">{glyph("#ffffff")}</div>
        <div className="flex w-[41px] items-center justify-center">{glyph("#bcd5ee")}</div>
        <div className="flex w-[41px] items-center justify-center border-2 border-[#45a8ee]">{glyph("#d4a578")}</div>
      </div>
      <div className="ml-[16px] flex h-[37px] w-[37px] items-center justify-center bg-white">
        <svg width="20" height="20" viewBox="0 0 20 20">
          <rect x="1" y="1.5" width="18" height="13" rx="1" fill="none" stroke="#6e6e6e" strokeWidth="1.8" />
          <circle cx="10" cy="8" r="3" fill="#6e6e6e" />
          <circle cx="10" cy="8" r="1" fill="#ffffff" />
          <path d="M4 18 H16" stroke="#6e6e6e" strokeWidth="1.6" />
        </svg>
      </div>
      <div className="ml-[14px] flex h-[37px] w-[96px] text-[15px] font-bold">
        <div className="flex w-[48px] items-center justify-center bg-[#45a8ee] text-[#e6f5fe]">2D</div>
        <div className="flex w-[48px] items-center justify-center bg-white text-[#45a8ee]">3D</div>
      </div>
    </div>
  );
}

export default function App() {
  return (
    <div className="h-[1315px] w-[1600px] overflow-hidden bg-[#f6f6f6] pb-[8px] pl-[8px] pr-[8px] pt-[7px]">
      <div className="flex h-full flex-col rounded-t-[6px] border-x border-b border-[#6e7277]">
        <TitleBar />
        <NavBar />
        <AppHeader />
        <div className="relative flex min-h-0 flex-1">
          <Sidebar />
          <div className="relative w-[73px] shrink-0 bg-white bg-[linear-gradient(to_right,rgba(0,0,0,.04)_1px,transparent_1px),linear-gradient(to_bottom,rgba(0,0,0,.04)_1px,transparent_1px)] bg-[size:14px_14px] bg-[position:6px_9px]">
            <ZoomControls />
            <UnitSwitch />
          </div>
          <div className="relative flex-1 bg-[#9a9ea7] bg-[linear-gradient(to_right,rgba(50,58,70,.11)_1px,transparent_1px),linear-gradient(to_bottom,rgba(50,58,70,.11)_1px,transparent_1px),linear-gradient(to_right,rgba(50,58,70,.05)_1px,transparent_1px),linear-gradient(to_bottom,rgba(50,58,70,.05)_1px,transparent_1px)] bg-[size:70px_70px,70px_70px,14px_14px,14px_14px] bg-[position:31px_23px,31px_23px,3px_9px,3px_9px]">
            <FloorPlan />
            <ViewToggles />
          </div>
          <div className="absolute left-[277px] top-[519px] flex h-[63px] w-[30px] items-center justify-center bg-[#4ab8f8]">
            <ChevronLeft size={20} strokeWidth={3} className="text-white" />
          </div>
        </div>
      </div>
    </div>
  );
}
